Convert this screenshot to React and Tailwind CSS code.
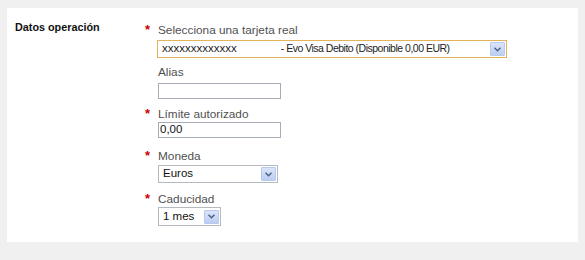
import React from "react";

function Arrow() {
  return (
    <div className="w-[15px] h-[14px] mr-[1px] border border-[#b8c9ee] bg-gradient-to-b from-[#dbe5fb] to-[#bccdf3] flex items-center justify-center rounded-[1px]">
      <svg width="7" height="5" viewBox="0 0 7 5">
        <path d="M0.5 0.8 L3.5 3.8 L6.5 0.8" stroke="#4d6185" strokeWidth="1.5" fill="none" />
      </svg>
    </div>
  );
}

function Star() {
  return <span className="w-[13px] text-[#cc0000] text-[13px] leading-[16px] font-bold">*</span>;
}

function Label({ req, children, className = "" }) {
  return (
    <div className={"flex h-[16px] items-center " + className}>
      {req ? <Star /> : <span className="w-[13px]" />}
      <span className="text-[11.8px] text-[#505050] leading-[16px]">{children}</span>
    </div>
  );
}

export default function App() {
  return (
    <div className="min-h-[260px] w-[585px] bg-[#f0f0f0] pt-[8px] pl-[7px]" style={{ fontFamily: "'Liberation Sans', Arial, sans-serif" }}>
      <div className="w-[571px] h-[234px] bg-white flex pt-[14px]">
        <div className="w-[138px] pl-[8px] -mt-[3px] font-bold text-[10.8px] text-[#111] leading-[16px]">Datos operación</div>
        <div className="flex flex-col">
          <Label req>Selecciona una tarjeta real</Label>
          <div className="ml-[12px] mt-[2px] w-[350px] h-[18px] border border-[#e3b35c] bg-white flex items-center justify-between">
            <span className="pl-[4px] text-[11.5px] text-[#222] whitespace-pre">
              {"xxxxxxxxxxxxx"}
              <span className="inline-block w-[44px]" />
              <span className="text-[10.5px] tracking-[-0.5px]">{"- Evo Visa Debito (Disponible 0,00 EUR)"}</span>
            </span>
            <Arrow />
          </div>

          <Label className="mt-[6px]">Alias</Label>
          <div className="ml-[13px] mt-[3px] w-[123px] h-[16px] border border-[#a5acb5] bg-white" />

          <Label req className="mt-[7px]">Límite autorizado</Label>
          <div className="ml-[13px] w-[123px] h-[16px] border border-[#a5acb5] bg-white flex items-center">
            <span className="pl-[1px] text-[11.5px] text-[#111]">0,00</span>
          </div>

          <Label req className="mt-[10px]">Moneda</Label>
          <div className="ml-[13px] mt-[1px] w-[120px] h-[18px] border border-[#b5b9c0] bg-white flex items-center justify-between">
            <span className="pl-[4px] text-[11.5px] text-[#111]">Euros</span>
            <Arrow />
          </div>

          <Label req className="mt-[8px]">Caducidad</Label>
          <div className="ml-[13px] w-[63px] h-[19px] border border-[#b5b9c0] bg-white flex items-center justify-between">
            <span className="pl-[4px] text-[11.5px] text-[#111]">1 mes</span>
            <Arrow />
          </div>
        </div>
      </div>
    </div>
  );
}
